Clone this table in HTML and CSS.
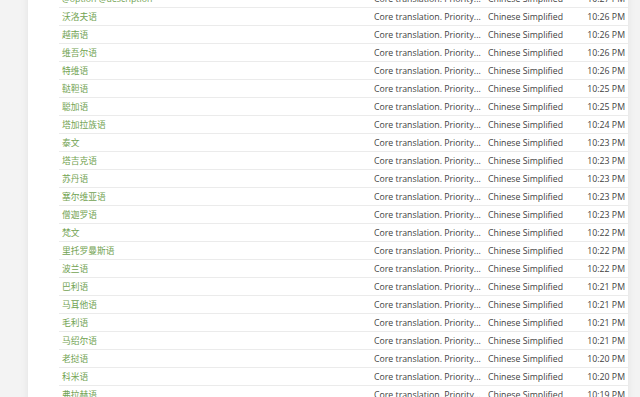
FILE: index.html
```html
<!DOCTYPE html>
<html lang="zh">
<head>
<meta charset="utf-8">
<link rel="stylesheet" href="styles.css">
</head>
<body>
<div class="page">
  <div class="panel">
    <div class="table">
      <div class="row"><span class="name">@option @description</span><span class="desc">Core translation. Priority...</span><span class="lang">Chinese Simplified</span><span class="time">10:27 PM</span></div>
      <div class="row"><span class="name">沃洛夫语</span><span class="desc">Core translation. Priority...</span><span class="lang">Chinese Simplified</span><span class="time">10:26 PM</span></div>
      <div class="row"><span class="name">越南语</span><span class="desc">Core translation. Priority...</span><span class="lang">Chinese Simplified</span><span class="time">10:26 PM</span></div>
      <div class="row"><span class="name">维吾尔语</span><span class="desc">Core translation. Priority...</span><span class="lang">Chinese Simplified</span><span class="time">10:26 PM</span></div>
      <div class="row"><span class="name">特维语</span><span class="desc">Core translation. Priority...</span><span class="lang">Chinese Simplified</span><span class="time">10:26 PM</span></div>
      <div class="row"><span class="name">鞑靼语</span><span class="desc">Core translation. Priority...</span><span class="lang">Chinese Simplified</span><span class="time">10:25 PM</span></div>
      <div class="row"><span class="name">聪加语</span><span class="desc">Core translation. Priority...</span><span class="lang">Chinese Simplified</span><span class="time">10:25 PM</span></div>
      <div class="row"><span class="name">塔加拉族语</span><span class="desc">Core translation. Priority...</span><span class="lang">Chinese Simplified</span><span class="time">10:24 PM</span></div>
      <div class="row"><span class="name">泰文</span><span class="desc">Core translation. Priority...</span><span class="lang">Chinese Simplified</span><span class="time">10:23 PM</span></div>
      <div class="row"><span class="name">塔吉克语</span><span class="desc">Core translation. Priority...</span><span class="lang">Chinese Simplified</span><span class="time">10:23 PM</span></div>
      <div class="row"><span class="name">苏丹语</span><span class="desc">Core translation. Priority...</span><span class="lang">Chinese Simplified</span><span class="time">10:23 PM</span></div>
      <div class="row"><span class="name">塞尔维亚语</span><span class="desc">Core translation. Priority...</span><span class="lang">Chinese Simplified</span><span class="time">10:23 PM</span></div>
      <div class="row"><span class="name">僧迦罗语</span><span class="desc">Core translation. Priority...</span><span class="lang">Chinese Simplified</span><span class="time">10:23 PM</span></div>
      <div class="row"><span class="name">梵文</span><span class="desc">Core translation. Priority...</span><span class="lang">Chinese Simplified</span><span class="time">10:22 PM</span></div>
      <div class="row"><span class="name">里托罗曼斯语</span><span class="desc">Core translation. Priority...</span><span class="lang">Chinese Simplified</span><span class="time">10:22 PM</span></div>
      <div class="row"><span class="name">波兰语</span><span class="desc">Core translation. Priority...</span><span class="lang">Chinese Simplified</span><span class="time">10:22 PM</span></div>
      <div class="row"><span class="name">巴利语</span><span class="desc">Core translation. Priority...</span><span class="lang">Chinese Simplified</span><span class="time">10:21 PM</span></div>
      <div class="row"><span class="name">马耳他语</span><span class="desc">Core translation. Priority...</span><span class="lang">Chinese Simplified</span><span class="time">10:21 PM</span></div>
      <div class="row"><span class="name">毛利语</span><span class="desc">Core translation. Priority...</span><span class="lang">Chinese Simplified</span><span class="time">10:21 PM</span></div>
      <div class="row"><span class="name">马绍尔语</span><span class="desc">Core translation. Priority...</span><span class="lang">Chinese Simplified</span><span class="time">10:21 PM</span></div>
      <div class="row"><span class="name">老挝语</span><span class="desc">Core translation. Priority...</span><span class="lang">Chinese Simplified</span><span class="time">10:20 PM</span></div>
      <div class="row"><span class="name">科米语</span><span class="desc">Core translation. Priority...</span><span class="lang">Chinese Simplified</span><span class="time">10:20 PM</span></div>
      <div class="row"><span class="name">弗拉赫语</span><span class="desc">Core translation. Priority...</span><span class="lang">Chinese Simplified</span><span class="time">10:19 PM</span></div>
    </div>
  </div>
</div>
</body>
</html>
```

FILE: styles.css
```css
html, body {
  margin: 0;
  padding: 0;
  height: 397px;
  overflow: hidden;
  background: #f3f3f3;
}
.page {
  padding-left: 28px;
  width: 600px;
}
.panel {
  background: #ffffff;
  box-shadow: 0 0 8px rgba(0, 0, 0, 0.07);
  padding-left: 31px;
  height: 420px;
}
.table {
  margin-top: -10px;
  font-family: "Open Sans", "Noto Sans CJK SC", sans-serif;
  font-size: 8.75px;
  color: #3f3f3f;
}
.row {
  display: grid;
  grid-template-columns: 312px 114px 1fr auto;
  height: 17px;
  align-items: center;
  border-bottom: 1px solid #ebebeb;
  white-space: nowrap;
}
.name {
  padding-left: 3px;
  color: #72a352;
}
.desc {
  padding-left: 3px;
}
.lang {
  padding-left: 3px;
}
.time {
  padding-right: 3px;
  text-align: right;
}
```
